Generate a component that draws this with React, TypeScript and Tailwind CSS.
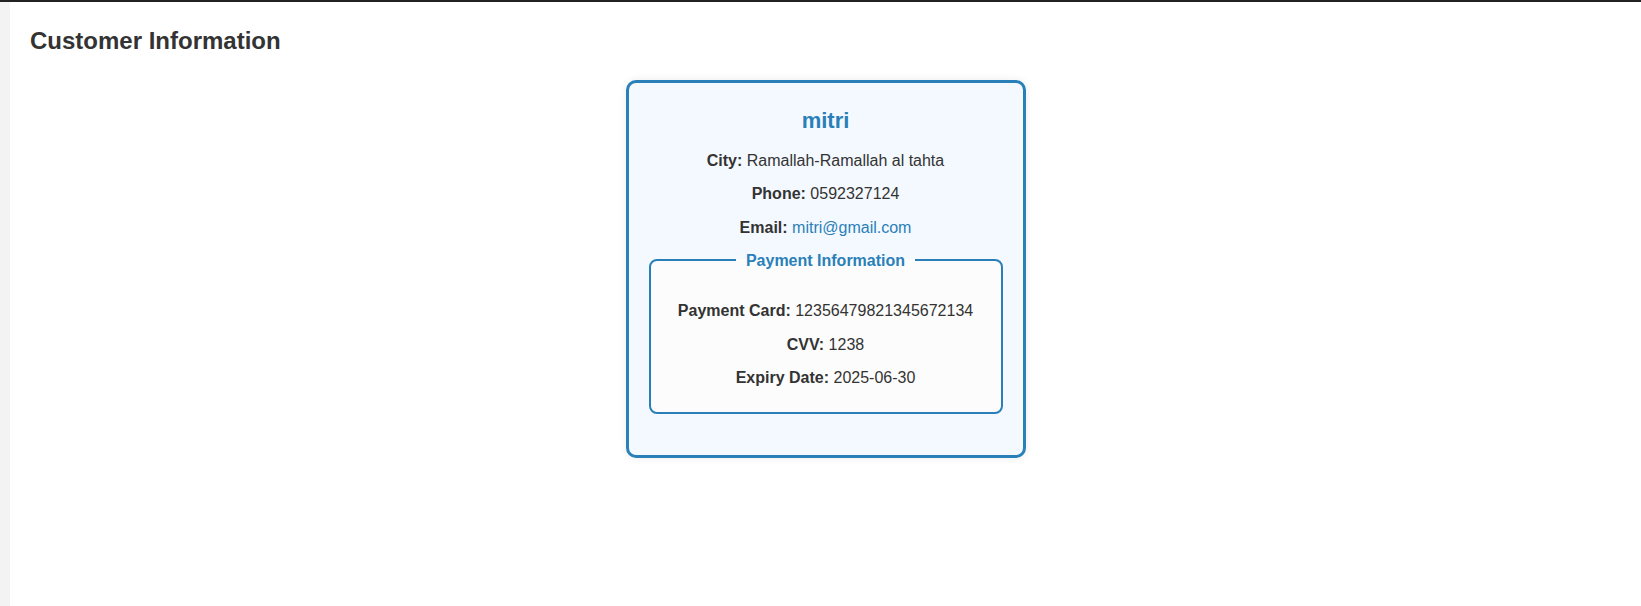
const customer = {
  name: 'mitri',
  city: 'Ramallah-Ramallah al tahta',
  phone: '0592327124',
  email: 'mitri@gmail.com',
  card: '12356479821345672134',
  cvv: '1238',
  expiry: '2025-06-30',
};

function InfoRow({ label, children }: { label: string; children: React.ReactNode }) {
  return (
    <p className="my-2 text-center text-base leading-[1.6] text-[#333]">
      <strong className="font-bold">{label}:</strong> {children}
    </p>
  );
}

export default function App() {
  return (
    <div
      className="flex min-h-[606px] border-t-2 border-[#222] bg-white"
      style={{ fontFamily: '"Liberation Sans", Arial, sans-serif' }}>
      <aside className="w-[10px] shrink-0 bg-[#f3f3f3]" />

      <main className="flex-1 px-5 pb-5 pt-[25px]">
        <h2 className="text-2xl font-bold leading-[1.2] text-[#333]">Customer Information</h2>

        <div className="mx-auto mt-6 w-[400px] rounded-[10px] border-[3px] border-[#2980b9] bg-[#f4f9ff] px-5 pb-[41px] pt-[25px] shadow-[0_0_8px_rgba(0,0,0,0.08)]">
          <h3 className="mb-[14px] text-center text-[22px] font-bold leading-[normal] text-[#2980b9]">
            {customer.name}
          </h3>

          <InfoRow label="City">{customer.city}</InfoRow>
          <InfoRow label="Phone">{customer.phone}</InfoRow>
          <InfoRow label="Email">
            <a href={`mailto:${customer.email}`} className="text-[#2980b9]">
              {customer.email}
            </a>
          </InfoRow>

          <fieldset className="-mt-px rounded-lg border-2 border-[#2980b9] bg-[#fcfcfc] px-4 pb-[13px] pt-[17px]">
            <legend className="mx-auto px-2.5 text-base font-bold leading-[1.6] text-[#2980b9]">
              Payment Information
            </legend>
            <InfoRow label="Payment Card">{customer.card}</InfoRow>
            <InfoRow label="CVV">{customer.cvv}</InfoRow>
            <InfoRow label="Expiry Date">{customer.expiry}</InfoRow>
          </fieldset>
        </div>
      </main>
    </div>
  );
}
